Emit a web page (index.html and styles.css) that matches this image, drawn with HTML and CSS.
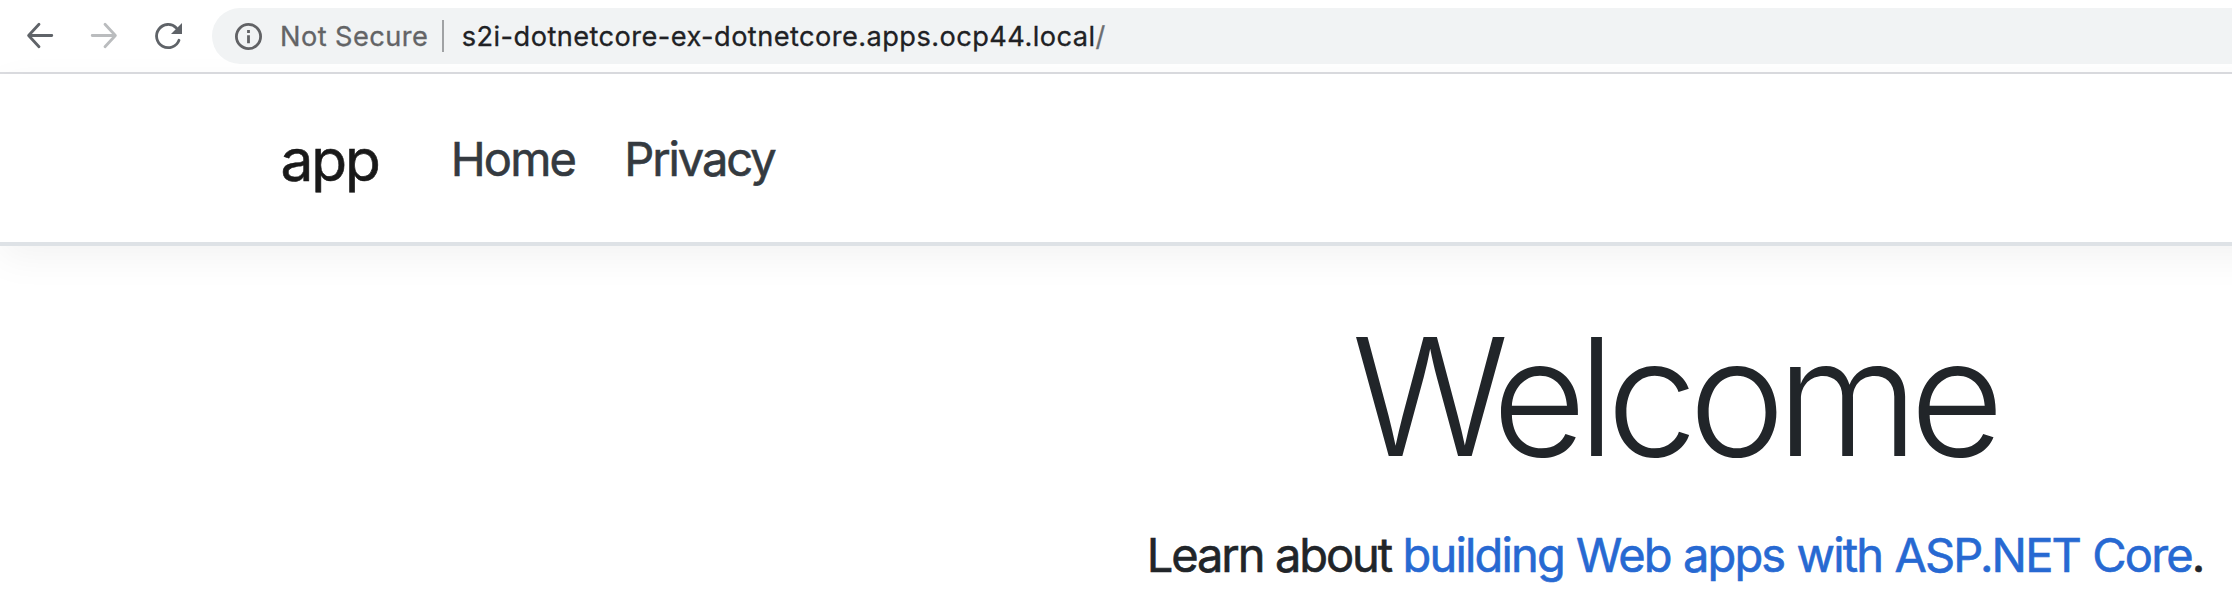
FILE: index.html
```html
<!DOCTYPE html>
<html lang="en">
<head>
<meta charset="utf-8">
<title>Home page - app</title>
<link rel="stylesheet" href="styles.css">
</head>
<body>
<div class="toolbar">
  <svg class="tool" viewBox="0 0 32 32"><path d="M27.8 15.5H4.8M15 4.2 4.6 15.5 15 26.8"/></svg>
  <svg class="tool tool-disabled" viewBox="0 0 32 32"><path d="M4.2 15.5h23M17 4.2l10.4 11.3L17 26.8"/></svg>
  <svg class="tool" viewBox="0 0 32 32"><path d="M27 20.2A11.6 11.6 0 1 1 24.4 7.9"/><path class="solid" d="M30 3v11H19z"/></svg>
  <div class="address">
    <svg class="info" viewBox="0 0 27 27"><circle cx="13.5" cy="13.5" r="12.1"/><path d="M13.5 12.2v8M13.5 7v2.9"/></svg>
    <span class="status">Not Secure</span>
    <span class="divider"></span>
    <span class="url">s2i-dotnetcore-ex-dotnetcore.apps.ocp44.local<span class="path">/</span></span>
  </div>
</div>
<header class="navbar">
  <a class="brand">app</a>
  <nav class="links">
    <a class="link-home">Home</a>
    <a class="link-privacy">Privacy</a>
  </nav>
</header>
<main class="content">
  <h1 class="title">Welcome</h1>
  <p class="lead">Learn about <a class="lead-link">building Web apps with ASP.NET Core</a>.</p>
</main>
</body>
</html>
```
FILE: styles.css
```css
body {
  margin: 0;
  height: 594px;
  overflow: hidden;
  background: #fff;
  font-family: Inter, sans-serif;
  white-space: nowrap;
}

.toolbar {
  display: flex;
  align-items: center;
  gap: 32px;
  height: 72px;
  padding-left: 24px;
  border-bottom: 2px solid #dbdce0;
}

.tool {
  flex: none;
  width: 32px;
  height: 32px;
  fill: none;
  stroke: #5f6368;
  stroke-width: 2.8;
  stroke-linecap: round;
  stroke-linejoin: round;
}

.tool-disabled { stroke: #babcbe; }

.tool .solid {
  fill: #5f6368;
  stroke: none;
}

.address {
  display: flex;
  align-items: center;
  flex: 1;
  height: 56px;
  margin-left: -4px;
  padding-left: 23px;
  border-radius: 28px 0 0 28px;
  background: #f1f3f4;
  font-size: 27.2px;
  letter-spacing: 0.44px;
  -webkit-text-stroke: 0.3px;
}

.info {
  width: 27px;
  height: 27px;
  margin-top: 1px;
  fill: none;
  stroke: #616265;
  stroke-width: 2.8;
}

.status {
  margin-left: 18px;
  color: #636466;
}

.divider {
  width: 2px;
  height: 32px;
  margin: 0 18px 0 13.5px;
  background: #a0a2a4;
}

.url { color: #202124; }

.path { color: #6b6d70; }

.navbar {
  display: flex;
  align-items: flex-start;
  height: 126px;
  margin-right: -60px;
  padding: 42px 0 0 280.5px;
  border-bottom: 4px solid #dee2e6;
  box-shadow: 0 12px 36px rgba(0, 0, 0, 0.05);
  -webkit-text-stroke: 0.6px;
}

.brand {
  color: #191919;
  font-size: 58.5px;
  line-height: 88px;
  letter-spacing: -2.1px;
}

.links {
  display: flex;
  gap: 49px;
  margin: 7px 0 0 72px;
  color: #343a40;
  font-size: 47px;
  line-height: 72px;
}

.link-home { letter-spacing: -1.8px; }

.link-privacy { letter-spacing: -2.05px; }

.content {
  padding: 50px 0 0 1118px;
  color: #212529;
  text-align: center;
}

.title {
  margin: 0 3px 21px 0;
  font-size: 163px;
  font-weight: 300;
  line-height: 202px;
  letter-spacing: -8.92px;
}

.lead {
  margin: 0;
  font-size: 47px;
  line-height: 72px;
  letter-spacing: -2.1px;
  word-spacing: 0.5px;
  -webkit-text-stroke: 0.6px;
}

.lead-link {
  color: #2769d2;
  letter-spacing: -1.85px;
  word-spacing: 0.9px;
}
```
